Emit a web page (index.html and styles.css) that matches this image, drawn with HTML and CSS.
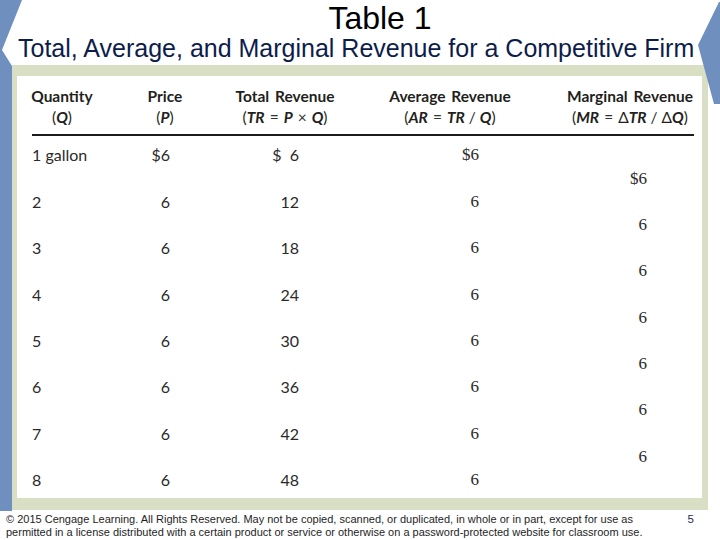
FILE: index.html
```html
<!DOCTYPE html>
<html>
<head>
<meta charset="utf-8">
<title>Table 1</title>
<link rel="stylesheet" href="styles.css">
</head>
<body>
<div class="slide">
  <svg class="deco deco-left" viewBox="0 0 24 512" aria-hidden="true">
    <polygon points="0,0 22,0 2,50 12,66 12,511 0,511" fill="#6f8fbf"/>
  </svg>
  <svg class="deco deco-right" viewBox="0 0 24 110" aria-hidden="true">
    <polygon points="23,2 24,2 24,104 18,104 2,45" fill="#6f8fbf"/>
  </svg>

  <h1 class="title">Table 1</h1>
  <h2 class="subtitle">Total, Average, and Marginal Revenue for a Competitive Firm</h2>

  <div class="frame">
    <div class="panel">
      <div class="thead">
        <div class="th">Quantity<br><span class="sub">(<i>Q</i>)</span></div>
        <div class="th">Price<br><span class="sub">(<i>P</i>)</span></div>
        <div class="th">Total Revenue<br><span class="sub">(<i>TR</i><span class="op">=</span><i>P</i><span class="op">×</span><i>Q</i>)</span></div>
        <div class="th">Average Revenue<br><span class="sub">(<i>AR</i><span class="op">=</span><i>TR</i><span class="op sl">/</span><i>Q</i>)</span></div>
        <div class="th">Marginal Revenue<br><span class="sub">(<i>MR</i><span class="op">=</span>Δ<i>TR</i><span class="op sl">/</span>Δ<i>Q</i>)</span></div>
      </div>
      <div class="tbody">
        <div class="q r1">1 gallon</div><div class="p r1">$6</div><div class="tr r1">$&nbsp;&nbsp;6</div><div class="ar r1">$6</div>
        <div class="mr r2">$6</div>
        <div class="q r3">2</div><div class="p r3">6</div><div class="tr r3">12</div><div class="ar r3">6</div>
        <div class="mr r4">6</div>
        <div class="q r5">3</div><div class="p r5">6</div><div class="tr r5">18</div><div class="ar r5">6</div>
        <div class="mr r6">6</div>
        <div class="q r7">4</div><div class="p r7">6</div><div class="tr r7">24</div><div class="ar r7">6</div>
        <div class="mr r8">6</div>
        <div class="q r9">5</div><div class="p r9">6</div><div class="tr r9">30</div><div class="ar r9">6</div>
        <div class="mr r10">6</div>
        <div class="q r11">6</div><div class="p r11">6</div><div class="tr r11">36</div><div class="ar r11">6</div>
        <div class="mr r12">6</div>
        <div class="q r13">7</div><div class="p r13">6</div><div class="tr r13">42</div><div class="ar r13">6</div>
        <div class="mr r14">6</div>
        <div class="q r15">8</div><div class="p r15">6</div><div class="tr r15">48</div><div class="ar r15">6</div>
      </div>
    </div>
  </div>

  <footer class="footer">
    <p class="copy">© 2015 Cengage Learning. All Rights Reserved. May not be copied, scanned, or duplicated, in whole or in part, except for use as<br>permitted in a license distributed with a certain product or service or otherwise on a password-protected website for classroom use.</p>
    <span class="page">5</span>
  </footer>
</div>
</body>
</html>
```

FILE: styles.css
```css
body {
  margin: 0;
  background: #fff;
}

.slide {
  position: relative;
  width: 720px;
  height: 540px;
  overflow: hidden;
  background: #fff;
  font-family: "Liberation Sans", Arial, sans-serif;
}

.deco {
  position: absolute;
  top: 0;
}

.deco-left {
  left: 0;
  width: 24px;
  height: 512px;
}

.deco-right {
  right: 0;
  width: 24px;
  height: 110px;
}

.title {
  margin: 0;
  padding-left: 40px;
  font-size: 32px;
  font-weight: normal;
  line-height: 36px;
  text-align: center;
  color: #000;
}

.subtitle {
  margin: 0;
  padding-left: 18px;
  font-size: 25px;
  font-weight: normal;
  line-height: 25px;
  color: #0d1d4b;
  white-space: nowrap;
}

.frame {
  margin: 4px 12px 0 12px;
  padding: 11px 6px 12px 5px;
  background: #d8dfc5;
}

.panel {
  background: #fff;
  padding: 9.5px 8px 6.6px 15px;
}

.thead {
  display: grid;
  grid-template-columns: 60px 146px 94px 236px 124px;
  padding-bottom: 6.5px;
  border-bottom: 2px solid #1c1c1c;
  font-family: Lato, "Open Sans", sans-serif;
  font-weight: bold;
  font-size: 15.5px;
  line-height: 21px;
  word-spacing: 2px;
  color: #231f20;
}

.th {
  margin: 0 -20px;
  text-align: center;
  white-space: nowrap;
}

.sub {
  word-spacing: 0;
  font-weight: normal;
}

.sub i {
  font-style: italic;
  font-weight: bold;
}

.op {
  margin: 0 5px;
  color: #333;
}

.op.sl {
  margin: 0 4px;
}

.tbody {
  display: grid;
  grid-template-columns: 60px 146px 94px 236px 124px;
  grid-template-rows: repeat(15, 23.2px);
  margin-top: 7.4px;
  font-family: Lato, "Open Sans", sans-serif;
  font-size: 16px;
  line-height: 23.2px;
  color: #2a2a2a;
}

.q { grid-column: 1; text-align: left; white-space: nowrap; }
.p { grid-column: 2; text-align: right; padding-right: 68px; }
.tr { grid-column: 3; text-align: right; padding-right: 33px; }
.ar {
  grid-column: 4;
  text-align: right;
  padding-right: 89px;
  font-family: "Liberation Serif", "DejaVu Serif", serif;
  font-size: 17px;
}
.mr {
  grid-column: 5;
  text-align: right;
  padding-right: 45px;
  font-family: "Liberation Serif", "DejaVu Serif", serif;
  font-size: 17px;
}

.r1 { grid-row: 1; }
.r2 { grid-row: 2; }
.r3 { grid-row: 3; }
.r4 { grid-row: 4; }
.r5 { grid-row: 5; }
.r6 { grid-row: 6; }
.r7 { grid-row: 7; }
.r8 { grid-row: 8; }
.r9 { grid-row: 9; }
.r10 { grid-row: 10; }
.r11 { grid-row: 11; }
.r12 { grid-row: 12; }
.r13 { grid-row: 13; }
.r14 { grid-row: 14; }
.r15 { grid-row: 15; }

.footer {
  display: flex;
  align-items: flex-start;
  padding: 3px 26px 0 6px;
  font-size: 11px;
  line-height: 13px;
  color: #1e1e1e;
}

.copy {
  margin: 0;
  white-space: nowrap;
}

.page {
  margin-left: auto;
  color: #1f2d4f;
  font-size: 11.5px;
}
```
